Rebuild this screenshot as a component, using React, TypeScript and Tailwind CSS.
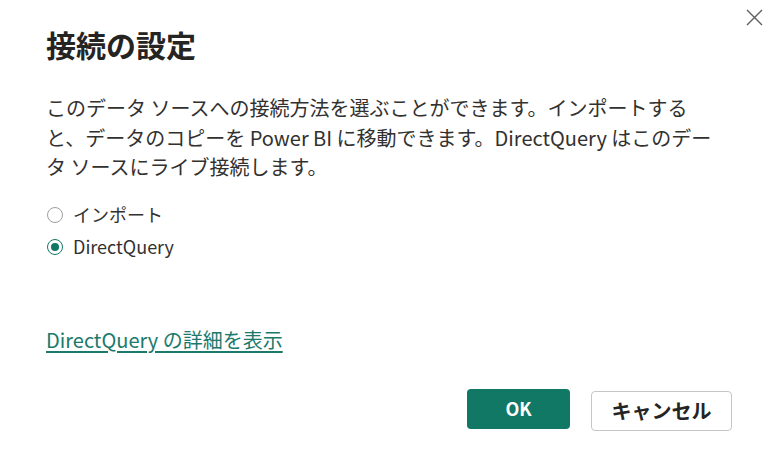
const Radio = ({ checked }: { checked?: boolean }) => {
  return checked ? (
    <span className="flex h-[16px] w-[16px] shrink-0 items-center justify-center rounded-full border-[1.5px] border-[#117865]">
      <span className="h-[8px] w-[8px] rounded-full bg-[#117865]" />
    </span>
  ) : (
    <span className="h-[16px] w-[16px] shrink-0 rounded-full border-[1.5px] border-[#a19f9d]" />
  );
};

const App = () => {
  return (
    <div className="relative h-[461px] w-[776px] overflow-hidden bg-white text-[#252423] font-['Noto_Sans_CJK_JP','Noto_Sans',sans-serif]">
      <button className="absolute right-[10px] top-[5px] flex h-[24px] w-[24px] items-center justify-center text-[#605e5c]">
        <svg width="17" height="17" viewBox="0 0 17 17" fill="none" stroke="currentColor" strokeWidth="1.4">
          <path d="M1 1L16 16M16 1L1 16" />
        </svg>
      </button>

      <div className="flex h-full flex-col pl-[46px] pr-[44px] pt-[24px]">
        <h1 className="text-[30px] font-bold leading-[40px]">接続の設定</h1>

        <p className="mt-[29px] whitespace-nowrap text-[20px] leading-[29.5px] text-[#323130]">
          このデータ ソースへの接続方法を選ぶことができます。インポートする
          <br />
          と、データのコピーを Power BI に移動できます。DirectQuery はこのデー
          <br />
          タ ソースにライブ接続します。
        </p>

        <div className="mt-[17px] flex flex-col text-[18px] text-[#323130]">
          <label className="flex h-[32px] items-center gap-[10px] pl-[1px]">
            <Radio />
            <span>インポート</span>
          </label>
          <label className="flex h-[32px] items-center gap-[10px] pl-[1px]">
            <Radio checked />
            <span>DirectQuery</span>
          </label>
        </div>

        <a className="mt-[62px] self-start text-[20px] leading-[30px] text-[#1b7a6c] underline underline-offset-[3px]">
          DirectQuery の詳細を表示
        </a>

        <div className="mt-[34px] flex justify-end gap-[21px]">
          <button className="h-[40px] w-[103px] rounded-[4px] bg-[#117865] text-[18px] font-bold text-white">
            OK
          </button>
          <button className="mt-[2px] h-[40px] w-[141px] rounded-[4px] border border-[#c8c6c4] bg-white text-[20px] font-bold text-[#252423]">
            キャンセル
          </button>
        </div>
      </div>
    </div>
  );
};

export default App;
